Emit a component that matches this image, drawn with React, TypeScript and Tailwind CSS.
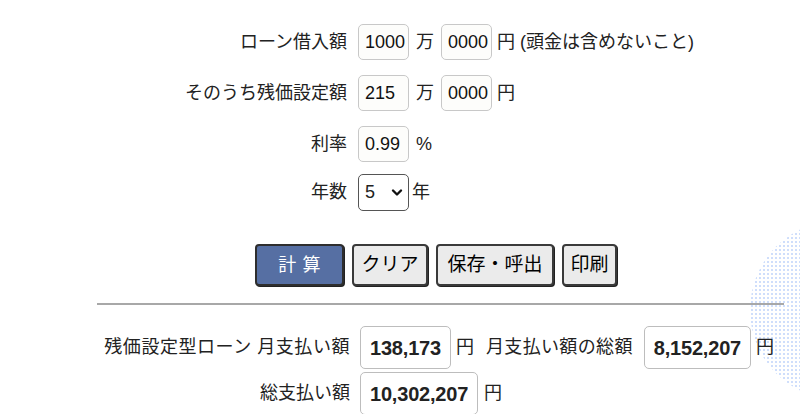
import React from 'react'

const FONT = { fontFamily: '"Liberation Sans", "Noto Sans CJK JP", sans-serif' }

function NumBox({ value }: { value: string }) {
  return (
    <input
      defaultValue={value}
      className="w-[51px] h-[36px] border border-[#c8c8c8] rounded-[5px] bg-[#fdfdfb] pl-[6px] pr-[1px] text-[18px] text-[#111] outline-none"
      style={FONT}
    />
  )
}

function Row({ label, children }: { label: string; children: React.ReactNode }) {
  return (
    <div className="flex items-center h-[36px]">
      <div className="w-[347px] text-right shrink-0">{label}</div>
      <div className="flex items-center ml-[11px]">{children}</div>
    </div>
  )
}

function Result({ value }: { value: string }) {
  return (
    <span className="inline-flex items-center h-[43px] px-[9px] border border-[#bdbdbd] rounded-[5px] bg-white text-[20px] font-bold text-[#222] tracking-[-0.01em]">
      {value}
    </span>
  )
}

export default function App() {
  return (
    <div className="relative w-[800px] h-[414px] overflow-hidden bg-white text-[18px] text-[#222]" style={FONT}>
      {/* dotted decoration at right edge */}
      <div
        className="absolute left-[750px] top-[220px] w-[180px] h-[180px] rounded-full"
        style={{
          backgroundImage: 'radial-gradient(#cfdefb 1.3px, transparent 1.4px)',
          backgroundSize: '4px 4px',
        }}
      />

      <div className="relative flex flex-col pt-[24px]">
        <div className="flex flex-col gap-[15px]">
          <Row label="ローン借入額">
            <NumBox value="1000" />
            <span className="mx-[7px]">万</span>
            <NumBox value="0000" />
            <span className="ml-[5px]">円 (頭金は含めないこと)</span>
          </Row>
          <Row label="そのうち残価設定額">
            <NumBox value="215" />
            <span className="mx-[7px]">万</span>
            <NumBox value="0000" />
            <span className="ml-[5px]">円</span>
          </Row>
          <Row label="利率">
            <NumBox value="0.99" />
            <span className="ml-[7px]">%</span>
          </Row>
          <div className="flex items-center h-[37px] -mt-[3px]">
            <div className="w-[347px] text-right shrink-0">年数</div>
            <div className="flex items-center ml-[11px]">
              <div className="relative w-[51px] h-[37px] border border-[#555] rounded-[5px] bg-white flex items-center pl-[6px]">
                <span className="text-[18px]">5</span>
                <svg className="absolute right-[5px] top-[13px]" width="12" height="10" viewBox="0 0 12 10">
                  <path d="M2 2.5 L6 6.5 L10 2.5" fill="none" stroke="#111" strokeWidth="2.4" strokeLinecap="round" strokeLinejoin="round" />
                </svg>
              </div>
              <span className="ml-[3px]">年</span>
            </div>
          </div>
        </div>

        <div className="flex items-center gap-[8px] mt-[33px] ml-[255px]">
          <button className="h-[42px] w-[89px] rounded-[4px] border-2 border-[#2e2e2e] bg-[#566fa3] text-white text-[18px] tracking-[0.35em] pl-[6px] shadow-[1px_1px_0_#222]">
            計算
          </button>
          <button className="h-[42px] w-[76px] rounded-[4px] border-2 border-[#3a3a3a] bg-[#ebebeb] text-black text-[19px] shadow-[1px_1px_0_#222]">
            クリア
          </button>
          <button className="h-[42px] w-[118px] rounded-[4px] border-2 border-[#3a3a3a] bg-[#ebebeb] text-black text-[19px] shadow-[1px_1px_0_#222]">
            保存・呼出
          </button>
          <button className="h-[42px] w-[55px] rounded-[4px] border-2 border-[#3a3a3a] bg-[#ebebeb] text-black text-[19px] shadow-[1px_1px_0_#222]">
            印刷
          </button>
        </div>

        <div className="mt-[17px] ml-[97px] w-[687px] h-[2px] bg-[#a8a8a8]" />

        <div className="flex flex-col mt-[21px] gap-[3px]">
          <div className="flex items-center">
            <div className="w-[350px] text-right shrink-0 tracking-[0.03em]">残価設定型ローン 月支払い額</div>
            <div className="flex items-center ml-[10px]">
              <Result value="138,173" />
              <span className="ml-[5px]">円</span>
              <span className="ml-[12px] tracking-[0.02em]">月支払い額の総額</span>
              <span className="ml-[11px]"><Result value="8,152,207" /></span>
              <span className="ml-[5px]">円</span>
            </div>
          </div>
          <div className="flex items-center">
            <div className="w-[350px] text-right shrink-0">総支払い額</div>
            <div className="flex items-center ml-[10px]">
              <Result value="10,302,207" />
              <span className="ml-[6px]">円</span>
            </div>
          </div>
        </div>
      </div>
    </div>
  )
}
